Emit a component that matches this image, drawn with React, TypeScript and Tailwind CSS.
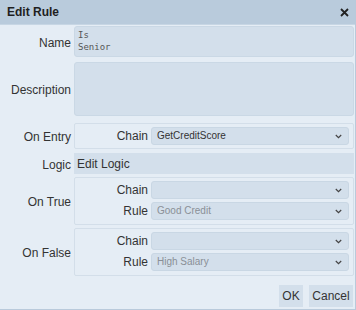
import React from 'react';

const font = { fontFamily: '"Liberation Sans", Arial, sans-serif' };

const Chevron: React.FC = () => (
    <svg width="7" height="5" viewBox="0 0 7 5" className="text-[#444]">
        <path d="M0.8 1 L3.5 3.7 L6.2 1" fill="none" stroke="currentColor" strokeWidth="1.2" />
    </svg>
);

interface SelectProps {
    value?: string;
    placeholder?: boolean;
}

const FakeSelect: React.FC<SelectProps> = ({ value, placeholder }) => (
    <div className="h-[18px] rounded-[3px] bg-[#d3dfeb] border border-[#c9d7e4] flex items-center justify-between pl-[5px] pr-[6px]">
        <span className={`text-[10px] leading-none ${placeholder ? 'text-[#8a8f96]' : 'text-[#333]'}`}>{value}</span>
        <Chevron />
    </div>
);

const SubRow: React.FC<{ label: string; children: React.ReactNode }> = ({ label, children }) => (
    <div className="grid grid-cols-[73px_1fr] gap-x-[3px] items-center">
        <span className="text-right text-[12px] leading-none text-[#333]">{label}</span>
        {children}
    </div>
);

const Row: React.FC<{ label: string; className?: string; children: React.ReactNode }> = ({ label, className, children }) => (
    <div className={`grid grid-cols-[71px_1fr] gap-x-[3px] items-center ${className ?? ''}`}>
        <span className="text-right text-[12px] leading-none text-[#333] pt-[2px]">{label}</span>
        {children}
    </div>
);

const Box: React.FC<{ children: React.ReactNode }> = ({ children }) => (
    <div className="border border-[#d3dee9] rounded-[2px] pt-[3px] pb-[4px] pr-[4px] flex flex-col gap-[3px]">
        {children}
    </div>
);

export default function App() {
    return (
        <div style={font} className="w-[356px] h-[310px] flex flex-col bg-[#e5edf5] border-r border-b border-[#b9cadb] overflow-hidden">
            <div className="h-[25px] shrink-0 bg-[#b9cbdc] border-b border-[#c7d6e4] flex items-center justify-between pl-[7px] pr-[6px]">
                <span className="text-[12px] font-bold text-[#1f1f1f]">Edit Rule</span>
                <svg width="9" height="9" viewBox="0 0 9 9">
                    <path d="M1 1 L8 8 M8 1 L1 8" stroke="#222" strokeWidth="1.8" />
                </svg>
            </div>

            <div className="flex flex-col pr-[1px]">
                <Row label="Name" className="mt-[1px]">
                    <div
                        className="h-[31px] rounded-[3px] bg-[#d3dfeb] border border-[#cad8e5] px-[3px] pt-[2px] text-[9px] leading-[12px] text-[#555]"
                        style={{ fontFamily: '"DejaVu Sans Mono", "Liberation Mono", monospace' }}
                    >
                        <div>Is</div>
                        <div>Senior</div>
                    </div>
                </Row>

                <Row label="Description" className="mt-[5px]">
                    <div className="h-[54px] rounded-[3px] bg-[#d3dfeb] border border-[#cad8e5]" />
                </Row>

                <Row label="On Entry" className="mt-[7px]">
                    <div className="border border-[#d3dee9] rounded-[2px] pt-[3px] pb-[3px] pr-[4px]">
                        <SubRow label="Chain">
                            <FakeSelect value="GetCreditScore" />
                        </SubRow>
                    </div>
                </Row>

                <Row label="Logic" className="mt-[4px]">
                    <div className="h-[21px] bg-[#d3dfeb] flex items-center pl-[3px] text-[12px] text-[#333]">Edit Logic</div>
                </Row>

                <Row label="On True" className="mt-[3px]">
                    <Box>
                        <SubRow label="Chain">
                            <FakeSelect />
                        </SubRow>
                        <SubRow label="Rule">
                            <FakeSelect value="Good Credit" placeholder />
                        </SubRow>
                    </Box>
                </Row>

                <Row label="On False" className="mt-[3px]">
                    <Box>
                        <SubRow label="Chain">
                            <FakeSelect />
                        </SubRow>
                        <SubRow label="Rule">
                            <FakeSelect value="High Salary" placeholder />
                        </SubRow>
                    </Box>
                </Row>

                <div className="flex justify-end gap-[6px] mt-[9px] pr-[1px]">
                    <button className="h-[22px] w-[24px] bg-[#d3dfeb] text-[12px] text-[#333]">OK</button>
                    <button className="h-[22px] w-[44px] bg-[#d3dfeb] text-[12px] text-[#333]">Cancel</button>
                </div>
            </div>
        </div>
    );
}
